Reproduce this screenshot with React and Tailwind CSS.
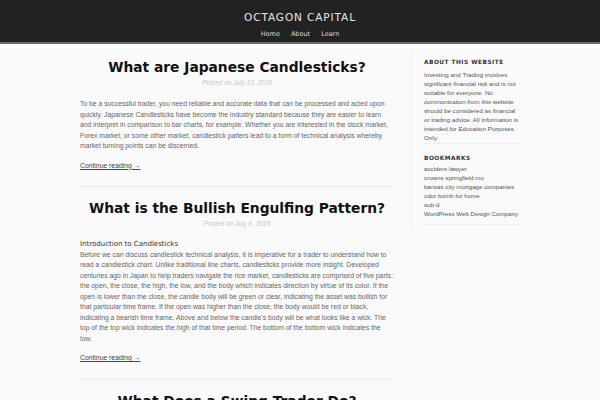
const posts = [
  {
    title: "What are Japanese Candlesticks?",
    date: "July 10, 2016",
    body: "To be a successful trader, you need reliable and accurate data that can be processed and acted upon quickly. Japanese Candlesticks have become the industry standard because they are easier to learn and interpret in comparison to bar charts, for example. Whether you are interested in the stock market, Forex market, or some other market, candlestick patters lead to a form of technical analysis whereby market turning points can be discerned.",
  },
  {
    title: "What is the Bullish Engulfing Pattern?",
    date: "July 8, 2016",
    sub: "Introduction to Candlesticks",
    body: "Before we can discuss candlestick technical analysis, it is imperative for a trader to understand how to read a candlestick chart. Unlike traditional line charts, candlesticks provide more insight. Developed centuries ago in Japan to help traders navigate the rice market, candlesticks are comprised of five parts: the open, the close, the high, the low, and the body which indicates direction by virtue of its color. If the open is lower than the close, the candle body will be green or clear, indicating the asset was bullish for that particular time frame. If the open was higher than the close, the body would be red or black, indicating a bearish time frame. Above and below the candle\u2019s body will be what looks like a wick. The top of the top wick indicates the high of that time period. The bottom of the bottom wick indicates the low.",
  },
  {
    title: "What Does a Swing Trader Do?",
    date: "July 5, 2016",
    body: "",
  },
];

const bookmarks = [
  "accident lawyer",
  "crowns springfield mo",
  "kansas city mortgage companies",
  "odor bomb for home",
  "sub-d",
  "WordPress Web Design Company",
];

const Post = ({ post, last }) => (
  <article className={last ? "pt-[11px]" : "pt-[11px] pb-[15px] border-b border-[#ececec]"}>
    <h1 className="text-center font-['DejaVu_Sans'] font-bold text-[13.8px] leading-[20px] text-[#111]">
      {post.title}
    </h1>
    <p className="mt-[1px] text-center italic text-[6.5px] leading-[10px] text-[#c8c8c8]">
      Posted on {post.date}
    </p>
    <div className="text-[6.8px] leading-[10.5px] text-[#666]">
      {post.sub ? (
        <p className="mt-[10px] font-['DejaVu_Sans'] text-[7px] text-[#333]">{post.sub}</p>
      ) : (
        <div className="h-[11px]" />
      )}
      <p>{post.body}</p>
      <p className="mt-[9px]">
        <a href="#" className="underline text-[#444]">
          Continue reading →
        </a>
      </p>
    </div>
  </article>
);

export default function App() {
  return (
    <div className="w-[600px] h-[400px] overflow-hidden bg-[#fafafa] font-['Liberation_Sans',Arial,sans-serif]">
      <header className="bg-[#222] border-b-2 border-[#6b6b6b] h-[44px] flex flex-col items-center">
        <div className="mt-[11px] font-['DejaVu_Sans'] text-[10.5px] leading-[13px] tracking-[0.9px] text-[#e6e6e6]">
          OCTAGON CAPITAL
        </div>
        <nav className="mt-[5px] flex gap-[11px] font-['DejaVu_Sans'] text-[6.5px] leading-[10px] text-[#ddd]">
          <a href="#">Home</a>
          <a href="#">About</a>
          <a href="#">Learn</a>
        </nav>
      </header>

      <div className="flex pl-[80px]">
        <main className="w-[314px] pt-[2px]">
          {posts.map((p, i) => (
            <Post key={i} post={p} last={i === posts.length - 1} />
          ))}
        </main>

        <aside className="ml-[17px] mt-[6px] h-[181px] border-l border-[#efefef] pl-[12px]">
          <div className="w-[96px] pt-[7px] pb-[1px] border-b border-[#eee]">
            <h3 className="font-['DejaVu_Sans'] font-bold text-[5.8px] tracking-[0.5px] text-[#333] leading-[10px]">
              ABOUT THIS WEBSITE
            </h3>
            <p className="mt-[3px] text-[6.2px] leading-[9px] text-[#555]">
              Investing and Trading involves significant financial risk and is not suitable for everyone. No communication from this website should be considered as financial or trading advice. All information is intended for Education Purposes Only.
            </p>
          </div>
          <div className="w-[96px] pt-[9px] pb-[6px] border-b border-[#eee]">
            <h3 className="font-['DejaVu_Sans'] font-bold text-[5.8px] tracking-[0.5px] text-[#333] leading-[10px]">
              BOOKMARKS
            </h3>
            <ul className="mt-[1px] text-[6.2px] leading-[9px] text-[#555] whitespace-nowrap">
              {bookmarks.map((b) => (
                <li key={b}>
                  <a href="#">{b}</a>
                </li>
              ))}
            </ul>
          </div>
        </aside>
      </div>
    </div>
  );
}
